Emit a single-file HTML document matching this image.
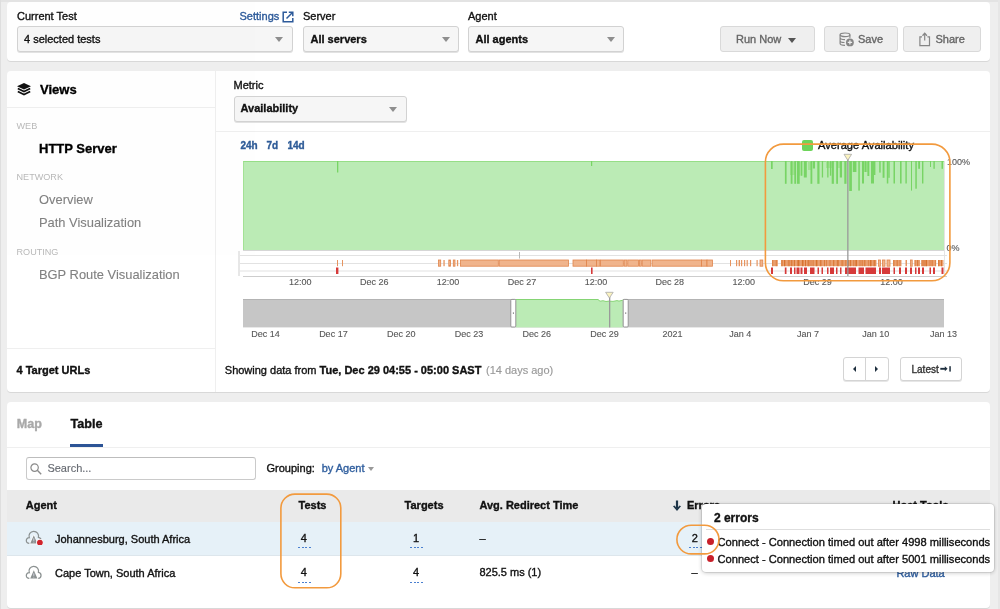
<!DOCTYPE html>
<html><head><meta charset="utf-8">
<style>
*{box-sizing:border-box;margin:0;padding:0}
html,body{-webkit-text-stroke:0.35px currentColor;width:1000px;height:609px;overflow:hidden;background:#eeeeee;font-family:"Liberation Sans",sans-serif;color:#222}
.a{position:absolute;white-space:nowrap;line-height:1}
.panel{position:absolute;left:7px;width:983px;background:#fff;border-radius:4px;box-shadow:0 1px 0 #d8d8d8}
.sel{position:absolute;height:26px;background:#f6f6f6;border:1px solid #d2d2d2;border-radius:3px;box-shadow:0 1px 0 #e2e2e2}
.arr{position:absolute;width:0;height:0;border-left:4px solid transparent;border-right:4px solid transparent;border-top:5px solid #8e8e8e}
.btn{position:absolute;height:25.6px;background:#efefef;border:1px solid #d9d9d9;border-radius:3px;color:#6a6a6a;font-size:12px}
.lbl{font-size:11px;color:#111}
.ax{font-size:9px;color:#585858;-webkit-text-stroke:0.12px #585858}
</style></head><body><div style="position:absolute;left:0;top:0;width:1000px;height:609px;will-change:opacity;opacity:0.999">
<div class="a" style="left:0;top:0;width:1000px;height:2px;background:#e3e3e3"></div><div class="a" style="left:998px;top:0;width:2px;height:609px;background:#e6e6e6"></div>
<div class="a" style="left:0;top:0;width:1px;height:609px;background:#dedede"></div>

<!-- Panel 1 -->
<div class="panel" style="top:2px;height:59px"></div>
<div class="a lbl" style="left:17px;top:10.7px">Current Test</div>
<div class="a" style="left:239.5px;top:10.7px;font-size:11px;color:#2d5a9a">Settings</div>
<svg class="a" style="left:282px;top:11px" width="12" height="12" viewBox="0 0 12 12"><path d="M5 1.2H1.2V10.8H10.8V7" fill="none" stroke="#2d5a9a" stroke-width="1.5"/><path d="M4.5 7.5L10.5 1.5M6.8 1.2H10.8V5.2" fill="none" stroke="#2d5a9a" stroke-width="1.5"/></svg>
<div class="sel" style="left:17px;top:26px;width:276px"></div>
<div class="a" style="left:24px;top:34px;font-size:11px;color:#111">4 selected tests</div>
<div class="arr" style="left:275px;top:37px"></div>

<div class="a lbl" style="left:303px;top:10.7px">Server</div>
<div class="sel" style="left:303px;top:26px;width:156px"></div>
<div class="a" style="left:310.5px;top:34px;font-size:11px;font-weight:bold;color:#111">All servers</div>
<div class="arr" style="left:442px;top:37.2px"></div>

<div class="a lbl" style="left:468px;top:10.7px">Agent</div>
<div class="sel" style="left:468px;top:26px;width:156px"></div>
<div class="a" style="left:475.5px;top:34px;font-size:11px;font-weight:bold;color:#111">All agents</div>
<div class="arr" style="left:607px;top:37.2px"></div>

<div class="btn" style="left:720px;top:26.1px;width:95px"></div>
<div class="a" style="left:736px;top:34px;font-size:11px;color:#666">Run Now</div>
<div class="arr" style="left:788px;top:38px;border-top-color:#555;border-left-width:4.5px;border-right-width:4.5px"></div>
<div class="btn" style="left:824px;top:26.1px;width:74px"></div>
<div class="a" style="left:858px;top:34px;font-size:11px;color:#666">Save</div>
<div class="btn" style="left:902.5px;top:26.1px;width:78px"></div>
<div class="a" style="left:935.5px;top:34px;font-size:11px;color:#666">Share</div>

<svg class="a" style="left:839px;top:32px" width="16" height="16" viewBox="0 0 16 16"><ellipse cx="6" cy="2.8" rx="4.9" ry="1.8" fill="none" stroke="#858585" stroke-width="1.2"/><path d="M1.1 2.8V11.6C1.1 12.6 3.3 13.4 6 13.4M1.1 5.8C1.1 6.8 3.3 7.6 6 7.6M1.1 8.7C1.1 9.7 3.3 10.5 5.5 10.5M10.9 2.8V6.5" fill="none" stroke="#858585" stroke-width="1.2"/><circle cx="10.9" cy="10.4" r="4.6" fill="#efefef"/><circle cx="10.9" cy="10.4" r="3.9" fill="#858585"/><path d="M10.9 8.2V12.6M8.7 10.4H13.1" stroke="#efefef" stroke-width="1.3"/></svg>
<svg class="a" style="left:918px;top:32px" width="13" height="15" viewBox="0 0 13 15"><path d="M4 4.8H1.9V13.6H11.5V4.8H9.4" fill="none" stroke="#858585" stroke-width="1.2"/><path d="M6.7 1.5V8.5" stroke="#858585" stroke-width="1.2"/><path d="M4.5 3.7L6.7 1.3L8.9 3.7" fill="none" stroke="#858585" stroke-width="1.3"/></svg>
<!-- Panel 2 -->
<div class="panel" style="top:71px;height:321px"></div>

<!-- Sidebar -->
<svg class="a" style="left:17px;top:83px" width="14" height="13" viewBox="0 0 14 13"><path d="M7 0L14 3.2L7 6.4L0 3.2Z" fill="#111"/><path d="M0.8 5.6L7 8.6L13.2 5.6" fill="none" stroke="#111" stroke-width="1.7"/><path d="M0.8 8.6L7 11.6L13.2 8.6" fill="none" stroke="#111" stroke-width="1.7"/></svg>
<div class="a" style="left:40px;top:83px;font-size:13px;font-weight:bold;color:#000">Views</div>
<div class="a" style="left:7px;top:107px;width:208px;height:1px;background:#efefef"></div>
<div class="a" style="left:215px;top:71px;width:1px;height:321px;background:#efefef"></div>
<div class="a" style="left:16.5px;top:121.6px;font-size:9.1px;color:#b8b8b8;-webkit-text-stroke:0">WEB</div>
<div class="a" style="left:39px;top:142px;font-size:13px;font-weight:bold;color:#000">HTTP Server</div>
<div class="a" style="left:16.5px;top:173.1px;font-size:9.1px;color:#b8b8b8;-webkit-text-stroke:0">NETWORK</div>
<div class="a" style="left:39px;top:194px;font-size:12.9px;color:#818181;-webkit-text-stroke:0.1px #818181">Overview</div>
<div class="a" style="left:39px;top:217px;font-size:12.9px;color:#818181;-webkit-text-stroke:0.1px #818181">Path Visualization</div>
<div class="a" style="left:16.5px;top:247.9px;font-size:9.1px;color:#b8b8b8;-webkit-text-stroke:0">ROUTING</div>
<div class="a" style="left:39px;top:269px;font-size:12.9px;color:#818181;-webkit-text-stroke:0.1px #818181">BGP Route Visualization</div>
<div class="a" style="left:7px;top:347.5px;width:208px;height:1px;background:#efefef"></div>
<div class="a" style="left:16.5px;top:365px;font-size:11px;font-weight:bold;color:#111">4 Target URLs</div>

<!-- Chart header -->
<div class="a lbl" style="left:233.5px;top:80.2px">Metric</div>
<div class="sel" style="left:233.5px;top:95.5px;width:173.5px"></div>
<div class="a" style="left:240.5px;top:103.2px;font-size:11px;font-weight:bold;color:#111">Availability</div>
<div class="arr" style="left:388.5px;top:106.5px"></div>
<div class="a" style="left:216px;top:130.5px;width:774px;height:1px;background:#efefef"></div>
<div class="a" style="left:240.5px;top:140.8px;font-size:10px;font-weight:bold;color:#2f5c98">24h</div>
<div class="a" style="left:266.5px;top:140.8px;font-size:10px;font-weight:bold;color:#2f5c98">7d</div>
<div class="a" style="left:287.5px;top:140.8px;font-size:10px;font-weight:bold;color:#2f5c98">14d</div>

<!--CHART-->
<div class="a ax" style="left:270.3px;width:60px;text-align:center;top:278.1px">12:00</div>
<div class="a ax" style="left:344.2px;width:60px;text-align:center;top:278.1px">Dec 26</div>
<div class="a ax" style="left:418.1px;width:60px;text-align:center;top:278.1px">12:00</div>
<div class="a ax" style="left:492.0px;width:60px;text-align:center;top:278.1px">Dec 27</div>
<div class="a ax" style="left:565.9px;width:60px;text-align:center;top:278.1px">12:00</div>
<div class="a ax" style="left:639.8px;width:60px;text-align:center;top:278.1px">Dec 28</div>
<div class="a ax" style="left:713.7px;width:60px;text-align:center;top:278.1px">12:00</div>
<div class="a ax" style="left:787.6px;width:60px;text-align:center;top:278.1px">Dec 29</div>
<div class="a ax" style="left:861.5px;width:60px;text-align:center;top:278.1px">12:00</div>
<div class="a ax" style="left:235.6px;width:60px;text-align:center;top:329.5px">Dec 14</div>
<div class="a ax" style="left:303.4px;width:60px;text-align:center;top:329.5px">Dec 17</div>
<div class="a ax" style="left:371.2px;width:60px;text-align:center;top:329.5px">Dec 20</div>
<div class="a ax" style="left:439.0px;width:60px;text-align:center;top:329.5px">Dec 23</div>
<div class="a ax" style="left:506.8px;width:60px;text-align:center;top:329.5px">Dec 26</div>
<div class="a ax" style="left:574.6px;width:60px;text-align:center;top:329.5px">Dec 29</div>
<div class="a ax" style="left:642.4px;width:60px;text-align:center;top:329.5px">2021</div>
<div class="a ax" style="left:710.2px;width:60px;text-align:center;top:329.5px">Jan 4</div>
<div class="a ax" style="left:778.0px;width:60px;text-align:center;top:329.5px">Jan 7</div>
<div class="a ax" style="left:845.8px;width:60px;text-align:center;top:329.5px">Jan 10</div>
<div class="a ax" style="left:913.6px;width:60px;text-align:center;top:329.5px">Jan 13</div>
<div class="a ax" style="left:947px;top:158.3px">100%</div>
<div class="a ax" style="left:946.5px;top:243.9px">0%</div>
<div class="a" style="left:802.2px;top:140px;width:10.8px;height:10.6px;background:#6dd45a;border-radius:2px"></div>
<div class="a" style="left:818px;top:140.4px;font-size:11.12px;color:#111">Average Availability</div>
<svg class="a" style="left:0;top:0" width="1000" height="609" viewBox="0 0 1000 609">
<rect x="243" y="161" width="701" height="89" fill="#bbebb5"/>
<rect x="243" y="161" width="701" height="0.8" fill="#8edb7c"/>
<rect x="243" y="161" width="0.8" height="89" fill="#9ee08e"/>
<rect x="790" y="161" width="5" height="14.0" fill="#a2e293"/>
<rect x="797" y="161" width="5" height="14.7" fill="#a2e293"/>
<rect x="808" y="161" width="4" height="9.0" fill="#a2e293"/>
<rect x="864.5" y="161" width="4.5" height="11.0" fill="#a2e293"/>
<rect x="826" y="161" width="6" height="7.0" fill="#a2e293"/>
<rect x="838" y="161" width="3" height="7.0" fill="#a2e293"/>
<rect x="337" y="161" width="1.3" height="11.5" fill="#78d465"/>
<rect x="591" y="161" width="1.2" height="5.0" fill="#78d465"/>
<rect x="771" y="161" width="1.7" height="8.0" fill="#78d465"/>
<rect x="784.9" y="161" width="1.7" height="22.8" fill="#78d465"/>
<rect x="790.7" y="161" width="1.8" height="22.8" fill="#78d465"/>
<rect x="794.3" y="161" width="1.8" height="22.8" fill="#78d465"/>
<rect x="797" y="161" width="2.7" height="22.8" fill="#78d465"/>
<rect x="801" y="161" width="1.4" height="14.7" fill="#78d465"/>
<rect x="803.8" y="161" width="3" height="16.5" fill="#78d465"/>
<rect x="810.5" y="161" width="1.8" height="22.8" fill="#78d465"/>
<rect x="812.8" y="161" width="2.2" height="7.5" fill="#78d465"/>
<rect x="817.3" y="161" width="2.2" height="22.8" fill="#78d465"/>
<rect x="821.8" y="161" width="1.3" height="16.5" fill="#78d465"/>
<rect x="827.2" y="161" width="1.3" height="16.5" fill="#78d465"/>
<rect x="829.9" y="161" width="1.3" height="14.7" fill="#78d465"/>
<rect x="831.7" y="161" width="2.2" height="22.8" fill="#78d465"/>
<rect x="836.2" y="161" width="1.8" height="22.8" fill="#78d465"/>
<rect x="839.8" y="161" width="2.2" height="16.5" fill="#78d465"/>
<rect x="844.3" y="161" width="2.2" height="22.8" fill="#78d465"/>
<rect x="849.2" y="161" width="2.7" height="30.0" fill="#78d465"/>
<rect x="852.8" y="161" width="3.6" height="11.0" fill="#78d465"/>
<rect x="855" y="161" width="1" height="11.0" fill="#78d465"/>
<rect x="858.3" y="161" width="1.5" height="29.6" fill="#78d465"/>
<rect x="862" y="161" width="2" height="22.5" fill="#78d465"/>
<rect x="864.5" y="161" width="1.9" height="11.0" fill="#78d465"/>
<rect x="867.4" y="161" width="1.9" height="15.0" fill="#78d465"/>
<rect x="871" y="161" width="3" height="22.5" fill="#78d465"/>
<rect x="874" y="161" width="1.4" height="14.0" fill="#78d465"/>
<rect x="879.2" y="161" width="1.5" height="11.6" fill="#78d465"/>
<rect x="882.6" y="161" width="1.9" height="16.8" fill="#78d465"/>
<rect x="886.8" y="161" width="1.5" height="22.5" fill="#78d465"/>
<rect x="888.3" y="161" width="1.4" height="16.8" fill="#78d465"/>
<rect x="893.5" y="161" width="1.5" height="22.5" fill="#78d465"/>
<rect x="900" y="161" width="1.6" height="22.5" fill="#78d465"/>
<rect x="905.4" y="161" width="1.4" height="22.5" fill="#78d465"/>
<rect x="911" y="161" width="1" height="29.6" fill="#78d465"/>
<rect x="915.3" y="161" width="1.5" height="27.7" fill="#78d465"/>
<rect x="918.2" y="161" width="1.8" height="7.8" fill="#78d465"/>
<rect x="922" y="161" width="1.4" height="22.5" fill="#78d465"/>
<rect x="930" y="161" width="1" height="6.0" fill="#78d465"/>
<rect x="933.4" y="161" width="1.4" height="7.8" fill="#78d465"/>
<rect x="941.5" y="161" width="1.5" height="7.8" fill="#78d465"/>
<rect x="944" y="161" width="1" height="115" fill="#e4e4e4"/>
<rect x="238.5" y="251" width="1" height="25" fill="#cfcfcf"/>
<rect x="243" y="250" width="701" height="1" fill="#d6d6d6"/>
<rect x="240" y="255" width="707" height="1" fill="#e2e2e2"/>
<rect x="240" y="263" width="707" height="1" fill="#e2e2e2"/>
<rect x="240" y="270.5" width="707" height="1" fill="#e2e2e2"/>
<rect x="243" y="276" width="704" height="1" fill="#cdcdcd"/>
<rect x="337" y="260" width="1" height="6.2" fill="#e69460"/>
<rect x="342" y="260" width="1" height="6.2" fill="#e69460"/>
<rect x="438.5" y="260" width="2.2" height="6.2" fill="#f0b48c" stroke="#e0844a" stroke-width="0.8"/>
<rect x="443.4" y="260" width="1.3" height="6.2" fill="#e69460"/>
<rect x="448.8" y="260" width="1.8" height="6.2" fill="#f0b48c" stroke="#e0844a" stroke-width="0.8"/>
<rect x="453.3" y="260" width="1.7" height="6.2" fill="#f0b48c" stroke="#e0844a" stroke-width="0.8"/>
<rect x="456.9" y="260" width="1.3" height="6.2" fill="#e69460"/>
<rect x="460.5" y="260" width="37.8" height="6.2" fill="#f0b48c" stroke="#e0844a" stroke-width="0.8"/>
<rect x="499.2" y="260" width="69.3" height="6.2" fill="#f0b48c" stroke="#e0844a" stroke-width="0.8"/>
<rect x="573" y="260" width="13.5" height="6.2" fill="#f0b48c" stroke="#e0844a" stroke-width="0.8"/>
<rect x="586.5" y="260" width="9.9" height="6.2" fill="#f0b48c" stroke="#e0844a" stroke-width="0.8"/>
<rect x="596.4" y="260" width="3.5" height="6.2" fill="#f0b48c" stroke="#e0844a" stroke-width="0.8"/>
<rect x="600.4" y="260" width="22.9" height="6.2" fill="#f0b48c" stroke="#e0844a" stroke-width="0.8"/>
<rect x="624.2" y="260" width="2.7" height="6.2" fill="#f0b48c" stroke="#e0844a" stroke-width="0.8"/>
<rect x="627.8" y="260" width="10.8" height="6.2" fill="#f0b48c" stroke="#e0844a" stroke-width="0.8"/>
<rect x="639.5" y="260" width="1.8" height="6.2" fill="#f0b48c" stroke="#e0844a" stroke-width="0.8"/>
<rect x="642.2" y="260" width="8.6" height="6.2" fill="#f0b48c" stroke="#e0844a" stroke-width="0.8"/>
<rect x="652.1" y="260" width="49.5" height="6.2" fill="#f0b48c" stroke="#e0844a" stroke-width="0.8"/>
<rect x="701.6" y="260" width="5.4" height="6.2" fill="#f0b48c" stroke="#e0844a" stroke-width="0.8"/>
<rect x="707" y="260" width="5.4" height="6.2" fill="#f0b48c" stroke="#e0844a" stroke-width="0.8"/>
<rect x="730" y="260" width="1" height="6.2" fill="#e69460"/>
<rect x="736" y="260" width="1.2" height="6.2" fill="#e69460"/>
<rect x="738.6" y="260" width="1.4" height="6.2" fill="#e69460"/>
<rect x="741" y="260" width="1.2" height="6.2" fill="#e69460"/>
<rect x="744" y="260" width="1.2" height="6.2" fill="#e69460"/>
<rect x="746.6" y="260" width="1.2" height="6.2" fill="#e69460"/>
<rect x="750" y="260" width="1.2" height="6.2" fill="#e69460"/>
<rect x="756.5" y="260" width="1.2" height="6.2" fill="#e69460"/>
<rect x="760" y="260" width="2.8" height="6.2" fill="#f0b48c" stroke="#e0844a" stroke-width="0.8"/>
<rect x="772" y="260" width="5.8" height="6.2" fill="#eaa070"/>
<rect x="772.0" y="260" width="1.2" height="6.2" fill="#d8732f" opacity="0.6"/>
<rect x="775.7" y="260" width="1.5" height="6.2" fill="#d8732f" opacity="0.6"/>
<rect x="878.5" y="260" width="2" height="6.2" fill="#f0b48c" stroke="#e0844a" stroke-width="0.8"/>
<rect x="882.5" y="260" width="2.5" height="6.2" fill="#f0b48c" stroke="#e0844a" stroke-width="0.8"/>
<rect x="887" y="260" width="3" height="6.2" fill="#f0b48c" stroke="#e0844a" stroke-width="0.8"/>
<rect x="893" y="260" width="8.5" height="6.2" fill="#eaa070"/>
<rect x="893.0" y="260" width="1.5" height="6.2" fill="#d8732f" opacity="0.6"/>
<rect x="896.5" y="260" width="1.5" height="6.2" fill="#d8732f" opacity="0.6"/>
<rect x="899.5" y="260" width="1" height="6.2" fill="#d8732f" opacity="0.6"/>
<rect x="905.5" y="260" width="1.5" height="6.2" fill="#e69460"/>
<rect x="910.5" y="260" width="1.7" height="6.2" fill="#f0b48c" stroke="#e0844a" stroke-width="0.8"/>
<rect x="914.5" y="260" width="5.5" height="6.2" fill="#eaa070"/>
<rect x="914.5" y="260" width="1.2" height="6.2" fill="#d8732f" opacity="0.6"/>
<rect x="917.2" y="260" width="1" height="6.2" fill="#d8732f" opacity="1"/>
<rect x="921.5" y="260" width="14.5" height="6.2" fill="#eaa070"/>
<rect x="921.5" y="260" width="1" height="6.2" fill="#d8732f" opacity="1"/>
<rect x="923.5" y="260" width="1" height="6.2" fill="#d8732f" opacity="1"/>
<rect x="925.5" y="260" width="1.5" height="6.2" fill="#d8732f" opacity="1"/>
<rect x="929.5" y="260" width="1" height="6.2" fill="#d8732f" opacity="0.6"/>
<rect x="931.5" y="260" width="1.5" height="6.2" fill="#d8732f" opacity="0.6"/>
<rect x="935.0" y="260" width="1.2" height="6.2" fill="#d8732f" opacity="0.6"/>
<rect x="938" y="260" width="5.5" height="6.2" fill="#eaa070"/>
<rect x="938.0" y="260" width="1.5" height="6.2" fill="#d8732f" opacity="0.8"/>
<rect x="941.0" y="260" width="1" height="6.2" fill="#d8732f" opacity="1"/>
<rect x="336" y="267.5" width="2.4" height="6.5" fill="#d63a3a"/>
<rect x="591" y="267.5" width="1.6" height="6.5" fill="#d63a3a"/>
<rect x="771" y="267.5" width="2" height="6.5" fill="#d63a3a"/>
<rect x="784.8" y="267.5" width="1.7" height="6.5" fill="#d63a3a"/>
<rect x="790" y="267.5" width="2" height="6.5" fill="#d63a3a"/>
<rect x="794" y="267.5" width="1.5" height="6.5" fill="#d63a3a"/>
<rect x="796.5" y="267.5" width="3" height="6.5" fill="#d63a3a"/>
<rect x="800.5" y="267.5" width="2" height="6.5" fill="#d63a3a"/>
<rect x="804" y="267.5" width="3" height="6.5" fill="#d63a3a"/>
<rect x="810" y="267.5" width="4.5" height="6.5" fill="#d63a3a"/>
<rect x="817.5" y="267.5" width="1.5" height="6.5" fill="#d63a3a"/>
<rect x="821.5" y="267.5" width="1.5" height="6.5" fill="#d63a3a"/>
<rect x="827" y="267.5" width="1.5" height="6.5" fill="#d63a3a"/>
<rect x="830" y="267.5" width="4" height="6.5" fill="#d63a3a"/>
<rect x="836" y="267.5" width="1.5" height="6.5" fill="#d63a3a"/>
<rect x="840" y="267.5" width="1.5" height="6.5" fill="#d63a3a"/>
<rect x="845" y="267.5" width="11" height="6.5" fill="#d63a3a"/>
<rect x="858.5" y="267.5" width="5.5" height="6.5" fill="#d63a3a"/>
<rect x="865.5" y="267.5" width="10.5" height="6.5" fill="#d63a3a"/>
<rect x="879" y="267.5" width="2" height="6.5" fill="#d63a3a"/>
<rect x="882" y="267.5" width="8" height="6.5" fill="#d63a3a"/>
<rect x="893.5" y="267.5" width="1.5" height="6.5" fill="#d63a3a"/>
<rect x="899" y="267.5" width="2" height="6.5" fill="#d63a3a"/>
<rect x="905" y="267.5" width="2" height="6.5" fill="#d63a3a"/>
<rect x="910" y="267.5" width="2" height="6.5" fill="#d63a3a"/>
<rect x="915" y="267.5" width="1.5" height="6.5" fill="#d63a3a"/>
<rect x="918" y="267.5" width="2" height="6.5" fill="#d63a3a"/>
<rect x="922" y="267.5" width="2" height="6.5" fill="#d63a3a"/>
<rect x="929.5" y="267.5" width="1.5" height="6.5" fill="#d63a3a"/>
<rect x="933" y="267.5" width="2" height="6.5" fill="#d63a3a"/>
<rect x="941.5" y="267.5" width="2" height="6.5" fill="#d63a3a"/>
<rect x="781" y="260" width="95.5" height="6.2" fill="#eaa070"/>
<rect x="781.5" y="260" width="1" height="6.2" fill="#d8732f" opacity="1"/>
<rect x="784.0" y="260" width="1.3" height="6.2" fill="#d8732f" opacity="1"/>
<rect x="787.8" y="260" width="2" height="6.2" fill="#d8732f" opacity="0.6"/>
<rect x="790.8" y="260" width="1.6" height="6.2" fill="#d8732f" opacity="0.8"/>
<rect x="793.9" y="260" width="1" height="6.2" fill="#d8732f" opacity="1"/>
<rect x="797.4" y="260" width="2" height="6.2" fill="#d8732f" opacity="1"/>
<rect x="801.9" y="260" width="1.6" height="6.2" fill="#d8732f" opacity="1"/>
<rect x="805.0" y="260" width="1" height="6.2" fill="#d8732f" opacity="1"/>
<rect x="807.5" y="260" width="2" height="6.2" fill="#d8732f" opacity="0.8"/>
<rect x="810.5" y="260" width="1" height="6.2" fill="#d8732f" opacity="0.6"/>
<rect x="812.5" y="260" width="1.3" height="6.2" fill="#d8732f" opacity="0.6"/>
<rect x="815.8" y="260" width="1.6" height="6.2" fill="#d8732f" opacity="1"/>
<rect x="819.9" y="260" width="1.6" height="6.2" fill="#d8732f" opacity="0.8"/>
<rect x="824.0" y="260" width="1" height="6.2" fill="#d8732f" opacity="0.8"/>
<rect x="826.0" y="260" width="1" height="6.2" fill="#d8732f" opacity="0.6"/>
<rect x="829.5" y="260" width="1" height="6.2" fill="#d8732f" opacity="0.8"/>
<rect x="833.0" y="260" width="1.3" height="6.2" fill="#d8732f" opacity="0.8"/>
<rect x="836.8" y="260" width="2" height="6.2" fill="#d8732f" opacity="0.8"/>
<rect x="841.3" y="260" width="2" height="6.2" fill="#d8732f" opacity="0.6"/>
<rect x="845.3" y="260" width="1" height="6.2" fill="#d8732f" opacity="0.8"/>
<rect x="847.8" y="260" width="1.3" height="6.2" fill="#d8732f" opacity="1"/>
<rect x="850.1" y="260" width="1" height="6.2" fill="#d8732f" opacity="1"/>
<rect x="853.1" y="260" width="1.3" height="6.2" fill="#d8732f" opacity="0.6"/>
<rect x="855.4" y="260" width="1.6" height="6.2" fill="#d8732f" opacity="1"/>
<rect x="859.5" y="260" width="1" height="6.2" fill="#d8732f" opacity="0.8"/>
<rect x="861.5" y="260" width="1.6" height="6.2" fill="#d8732f" opacity="0.6"/>
<rect x="864.1" y="260" width="1.3" height="6.2" fill="#d8732f" opacity="0.8"/>
<rect x="867.9" y="260" width="1" height="6.2" fill="#d8732f" opacity="0.6"/>
<rect x="869.9" y="260" width="1.6" height="6.2" fill="#d8732f" opacity="1"/>
<rect x="873.5" y="260" width="2" height="6.2" fill="#d8732f" opacity="0.8"/>
<rect x="519" y="252" width="1" height="6.5" fill="#b8b8b8"/>
<rect x="847.2" y="158" width="1.3" height="118" fill="#9a9a9a"/>
<path d="M844 154.3H851.6L847.8 160.3Z" fill="#fbf3c0" stroke="#a8a8a8" stroke-width="0.8"/>
<rect x="243" y="299" width="701" height="28.4" fill="#c6c6c6"/>
<rect x="243" y="299" width="701" height="1" fill="#b3b3b3"/>
<rect x="516" y="299" width="106.8" height="28.4" fill="#bbebb5"/>
<path d="M598 298.9L600 301.2L603 300.7L606 301.5L609 301.1L613 301.4L617 300.6L619 301.1L622.8 300.2V298.9Z" fill="#fff"/>
<path d="M516 299.5H598L600 301.2L603 300.7L606 301.5L609 301.1L613 301.4L617 300.6L619 301.1L622.8 300.2" fill="none" stroke="#7fd16c" stroke-width="0.9"/>
<rect x="609" y="297" width="1.3" height="30.4" fill="#9a9a9a"/>
<path d="M605.6 292.3H613.2L609.4 298Z" fill="#fbf3c0" stroke="#a8a8a8" stroke-width="0.8"/>
<rect x="510.79999999999995" y="299.4" width="5" height="27.6" rx="1" fill="#fff" stroke="#8c8c8c" stroke-width="0.9"/>
<rect x="512.9" y="312.5" width="0.9" height="1.2" fill="#444"/>
<rect x="623.1999999999999" y="299.4" width="5" height="27.6" rx="1" fill="#fff" stroke="#8c8c8c" stroke-width="0.9"/>
<rect x="625.3" y="312.5" width="0.9" height="1.2" fill="#444"/>
<rect x="765.4" y="144.1" width="184.5" height="136.7" rx="18" fill="none" stroke="#f29a3e" stroke-width="1.6"/>
</svg>
<!--/CHART-->
<!-- footer -->
<div class="a" style="left:224.8px;top:364.7px;font-size:11px;color:#111">Showing data from <b>Tue, Dec 29 04:55 - 05:00 SAST</b> <span style="color:#999;margin-left:1.5px;-webkit-text-stroke:0.15px #999">(14 days ago)</span></div>
<div class="a" style="left:842.5px;top:357px;width:46px;height:23.5px;background:#fff;border:1px solid #d4d4d4;border-radius:3px;box-shadow:0 1px 0 #e6e6e6"></div>
<div class="a" style="left:865px;top:358px;width:1px;height:22px;background:#d4d4d4"></div>
<div class="a" style="left:852.5px;top:366px;width:0;height:0;border-top:3px solid transparent;border-bottom:3px solid transparent;border-right:3.5px solid #1e2f3e"></div>
<div class="a" style="left:875px;top:366px;width:0;height:0;border-top:3px solid transparent;border-bottom:3px solid transparent;border-left:3.5px solid #1e2f3e"></div>
<div class="a" style="left:899.8px;top:357px;width:62px;height:23.5px;background:#fff;border:1px solid #d4d4d4;border-radius:3px;box-shadow:0 1px 0 #e6e6e6"></div>
<div class="a" style="left:911.5px;top:364.6px;font-size:10px;color:#333">Latest</div>
<svg class="a" style="left:939.5px;top:365px" width="12" height="8" viewBox="0 0 12 8"><path d="M0.3 3.8H5.5" stroke="#1e2f3e" stroke-width="1.9"/><path d="M4.8 1.3L7.6 3.8L4.8 6.3Z" fill="#1e2f3e"/><rect x="9.3" y="1.2" width="1.5" height="5.4" fill="#1e2f3e"/></svg>
<!-- Panel 3 -->
<div class="panel" style="top:402px;height:205.5px"></div>
<div class="a" style="left:16.75px;top:418.08px;font-size:12.6px;font-weight:bold;color:#a9a9a9;">Map</div>
<div class="a" style="left:70.5px;top:418.08px;font-size:12.6px;font-weight:bold;color:#111;">Table</div>
<div class="a" style="left:7px;top:446.5px;width:983px;height:1px;background:#efefef"></div>
<div class="a" style="left:70.3px;top:444.2px;width:33px;height:3px;background:#2c5496"></div>
<div class="a" style="left:26.2px;top:457px;width:230px;height:23.3px;background:#fff;border:1px solid #cacaca;border-top-color:#bdbdbd;border-radius:3px"></div>
<svg class="a" style="left:30px;top:463px" width="12" height="12" viewBox="0 0 12 12"><circle cx="4.6" cy="4.6" r="3.7" fill="none" stroke="#8a8a8a" stroke-width="1.2"/><path d="M7.3 7.3L11.2 11.2" stroke="#8a8a8a" stroke-width="1.4"/></svg>
<div class="a" style="left:47.4px;top:463.09px;font-size:11px;font-weight:normal;color:#676b72;-webkit-text-stroke:0.15px #676b72">Search...</div>
<div class="a" style="left:266.5px;top:462.99px;font-size:11px;font-weight:normal;color:#111;">Grouping:</div>
<div class="a" style="left:321.7px;top:462.99px;font-size:11px;font-weight:normal;color:#2f5e9e;">by Agent</div>
<div class="arr" style="left:368.3px;top:466.5px;border-top-color:#999;border-left-width:3.8px;border-right-width:3.8px;border-top-width:4.8px"></div>
<div class="a" style="left:7px;top:490px;width:983px;height:31.5px;background:#eaeaea"></div>
<div class="a" style="left:7px;top:521.5px;width:983px;height:34px;background:#e6f1f8"></div>
<div class="a" style="left:7px;top:555px;width:983px;height:1px;background:#dde6ec"></div>
<div class="a" style="left:25.8px;top:500.19px;font-size:11px;font-weight:bold;color:#111;">Agent</div>
<div class="a" style="left:298.5px;top:500.19px;font-size:11px;font-weight:bold;color:#111;">Tests</div>
<div class="a" style="left:404.6px;top:500.19px;font-size:11px;font-weight:bold;color:#111;">Targets</div>
<div class="a" style="left:479.4px;top:500.19px;font-size:11px;font-weight:bold;color:#111;">Avg. Redirect Time</div>
<svg class="a" style="left:672px;top:499.5px" width="10" height="12" viewBox="0 0 10 12"><path d="M5 0.5V8" stroke="#1e3548" stroke-width="2.2"/><path d="M1 6.2L5 11L9 6.2L7.6 5.4L5 8.2L2.4 5.4Z" fill="#1e3548"/></svg>
<div class="a" style="left:687px;top:500.19px;font-size:11px;font-weight:bold;color:#111;">Errors</div>
<div class="a" style="left:892.5px;top:500.19px;font-size:11px;font-weight:bold;color:#111;">Host Tools</div>
<svg class="a" style="left:24.5px;top:530px" width="18" height="15" viewBox="0 0 18 15"><path d="M4.6 13.3A2.8 2.8 0 1 1 4.3 7.75A4.8 4.8 0 1 1 13.42 7.33A3 3 0 0 1 13.2 13.3" fill="none" stroke="#8b9191" stroke-width="1.25"/><path d="M8.8 5.2L12.4 13.6H5.2Z" fill="#8b9191" stroke="#fff" stroke-width="1.5" stroke-linejoin="round" paint-order="stroke"/><path d="M8.8 8.3V10.9M8.8 11.7V12.5" stroke="#eef" stroke-width="0.7"/><circle cx="14.9" cy="12.6" r="3.7" fill="#fff"/><circle cx="14.9" cy="12.6" r="2.9" fill="#d0242c"/></svg><svg class="a" style="left:24.5px;top:564.5px" width="18" height="15" viewBox="0 0 18 15"><path d="M4.6 13.3A2.8 2.8 0 1 1 4.3 7.75A4.8 4.8 0 1 1 13.42 7.33A3 3 0 0 1 13.2 13.3" fill="none" stroke="#8b9191" stroke-width="1.25"/><path d="M8.8 5.2L12.4 13.6H5.2Z" fill="#8b9191" stroke="#fff" stroke-width="1.5" stroke-linejoin="round" paint-order="stroke"/><path d="M8.8 8.3V10.9M8.8 11.7V12.5" stroke="#eef" stroke-width="0.7"/></svg><div class="a" style="left:55px;top:533.59px;font-size:11px;font-weight:normal;color:#111;">Johannesburg, South Africa</div>
<div class="a" style="left:55px;top:567.69px;font-size:11px;font-weight:normal;color:#111;">Cape Town, South Africa</div>
<div class="a" style="left:300.7px;top:533.09px;font-size:11px;font-weight:normal;color:#111;">4</div>
<div class="a" style="left:297.5px;top:547.3px;width:13px;height:1.2px;background:repeating-linear-gradient(90deg,#4a80d0 0 2.4px,transparent 2.4px 3.5px)"></div>
<div class="a" style="left:413px;top:533.09px;font-size:11px;font-weight:normal;color:#111;">1</div>
<div class="a" style="left:409.5px;top:547.3px;width:13px;height:1.2px;background:repeating-linear-gradient(90deg,#4a80d0 0 2.4px,transparent 2.4px 3.5px)"></div>
<div class="a" style="left:479.4px;top:533.09px;font-size:11px;font-weight:normal;color:#111;">–</div>
<div class="a" style="left:691.7px;top:533.09px;font-size:11px;font-weight:normal;color:#111;">2</div>
<div class="a" style="left:688.5px;top:547.3px;width:13px;height:1.2px;background:repeating-linear-gradient(90deg,#4a80d0 0 2.4px,transparent 2.4px 3.5px)"></div>
<div class="a" style="left:300.7px;top:567.39px;font-size:11px;font-weight:normal;color:#111;">4</div>
<div class="a" style="left:297.5px;top:581.8px;width:13px;height:1.2px;background:repeating-linear-gradient(90deg,#4a80d0 0 2.4px,transparent 2.4px 3.5px)"></div>
<div class="a" style="left:413px;top:567.39px;font-size:11px;font-weight:normal;color:#111;">4</div>
<div class="a" style="left:409.5px;top:581.8px;width:13px;height:1.2px;background:repeating-linear-gradient(90deg,#4a80d0 0 2.4px,transparent 2.4px 3.5px)"></div>
<div class="a" style="left:479.4px;top:567.39px;font-size:11px;font-weight:normal;color:#111;">825.5 ms (1)</div>
<div class="a" style="left:691.5px;top:567.39px;font-size:11px;font-weight:normal;color:#111;">–</div>
<div class="a" style="left:896.4px;top:567.69px;font-size:11px;font-weight:normal;color:#2f5e9e;">Raw Data</div>
<div class="a" style="left:701.9px;top:504.4px;width:292.6px;height:67.4px;background:#fff;border-radius:4px;box-shadow:0 0 0 1px rgba(0,0,0,0.08),0 1px 4px rgba(0,0,0,0.22)"></div>
<div class="a" style="left:713.9px;top:511.54px;font-size:12px;font-weight:bold;color:#111;">2 errors</div>
<div class="a" style="left:706.3px;top:529px;width:283.4px;height:1px;background:#dedede"></div>
<div class="a" style="left:706.5px;top:538.1px;width:7px;height:7px;border-radius:50%;background:#c8202a"></div>
<div class="a" style="left:706.5px;top:554.9px;width:7px;height:7px;border-radius:50%;background:#c8202a"></div>
<div class="a" style="left:717.6px;top:537.2px;font-size:11.1px;font-weight:normal;color:#111;">Connect - Connection timed out after 4998 milliseconds</div>
<div class="a" style="left:717.6px;top:554px;font-size:11.1px;font-weight:normal;color:#111;">Connect - Connection timed out after 5001 milliseconds</div>
<svg class="a" style="left:0;top:0" width="1000" height="609"><rect x="280.9" y="494.1" width="59.9" height="93.7" rx="14" fill="none" stroke="#f29a3e" stroke-width="1.6"/><rect x="676.9" y="525.2" width="42.1" height="28.7" rx="14.3" fill="none" stroke="#f29a3e" stroke-width="1.6"/></svg>
</div></body></html>
